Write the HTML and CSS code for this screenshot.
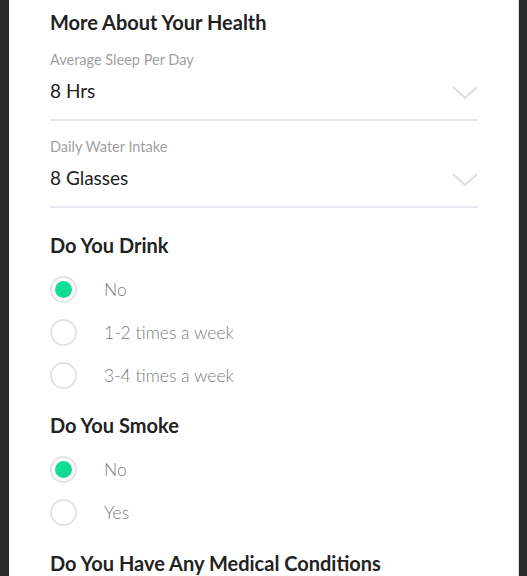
FILE: index.html
```html
<!DOCTYPE html>
<html>
<head>
<meta charset="utf-8">
<link rel="stylesheet" href="styles.css">
</head>
<body>
<div class="frame">
  <div class="sheet">
    <h2 class="title">More About Your Health</h2>
    <div class="field">
      <div class="label">Average Sleep Per Day</div>
      <div class="select">
        <span class="value">8 Hrs</span>
        <svg class="chev" width="26" height="14" viewBox="0 0 26 14"><path d="M1 1 L13 12 L25 1" fill="none" stroke="#dcdbe6" stroke-width="2"/></svg>
      </div>
    </div>
    <div class="field">
      <div class="label">Daily Water Intake</div>
      <div class="select">
        <span class="value">8 Glasses</span>
        <svg class="chev" width="26" height="14" viewBox="0 0 26 14"><path d="M1 1 L13 12 L25 1" fill="none" stroke="#dcdbe6" stroke-width="2"/></svg>
      </div>
    </div>
    <h2 class="title q">Do You Drink</h2>
    <div class="radios">
      <div class="radio"><span class="dot on"></span><span class="rl">No</span></div>
      <div class="radio"><span class="dot"></span><span class="rl">1-2 times a week</span></div>
      <div class="radio"><span class="dot"></span><span class="rl">3-4 times a week</span></div>
    </div>
    <h2 class="title q2">Do You Smoke</h2>
    <div class="radios">
      <div class="radio"><span class="dot on"></span><span class="rl">No</span></div>
      <div class="radio"><span class="dot"></span><span class="rl">Yes</span></div>
    </div>
    <h2 class="title q3">Do You Have Any Medical Conditions</h2>
  </div>
</div>
</body>
</html>
```
FILE: styles.css
```css
html, body {
  margin: 0;
  padding: 0;
  height: 100%;
  overflow: hidden;
  background: #2b2b2b;
}
body {
  font-family: Lato, "Open Sans", sans-serif;
}
.frame {
  display: flex;
  height: 100%;
  padding: 0 8px 0 9px;
  box-sizing: border-box;
}
.sheet {
  flex: 1;
  background: #fff;
  border-right: 1px solid #d8d8d8;
  padding: 0 40px 0 41px;
  display: flex;
  flex-direction: column;
}
.title {
  margin: 0;
  font-size: 20px;
  font-weight: 700;
  color: #222;
  line-height: 24px;
  padding-top: 10px;
  white-space: nowrap;
}
.title.q { padding-top: 25px; }
.title.q2 { padding-top: 16px; }
.title.q3 { padding-top: 17px; }
.field {
  border-bottom: 2px solid #e8e7ef;
  display: flex;
  flex-direction: column;
}
.label {
  font-size: 14.5px;
  color: #a0a0a0;
  line-height: 16px;
  padding-top: 18px;
}
.select {
  display: flex;
  align-items: center;
  justify-content: space-between;
  height: 24px;
  padding: 11px 0 16px;
}
.value {
  font-size: 19px;
  line-height: 24px;
  color: #1e1e1e;
}
.chev { margin-top: 3px; }
.radios {
  display: flex;
  flex-direction: column;
  padding-top: 11px;
}
.radio {
  display: flex;
  align-items: center;
  height: 43px;
}
.dot {
  width: 23px;
  height: 23px;
  border: 2px solid #e3e2ea;
  border-radius: 50%;
  box-sizing: content-box;
  position: relative;
  flex: none;
}
.dot.on::after {
  content: "";
  position: absolute;
  left: 3px;
  top: 3px;
  width: 17px;
  height: 17px;
  border-radius: 50%;
  background: linear-gradient(135deg, #16e39c, #0fd48f);
}
.rl {
  margin-left: 27px;
  font-size: 17.5px;
  font-weight: 300;
  color: #7c7c7c;
}
```
